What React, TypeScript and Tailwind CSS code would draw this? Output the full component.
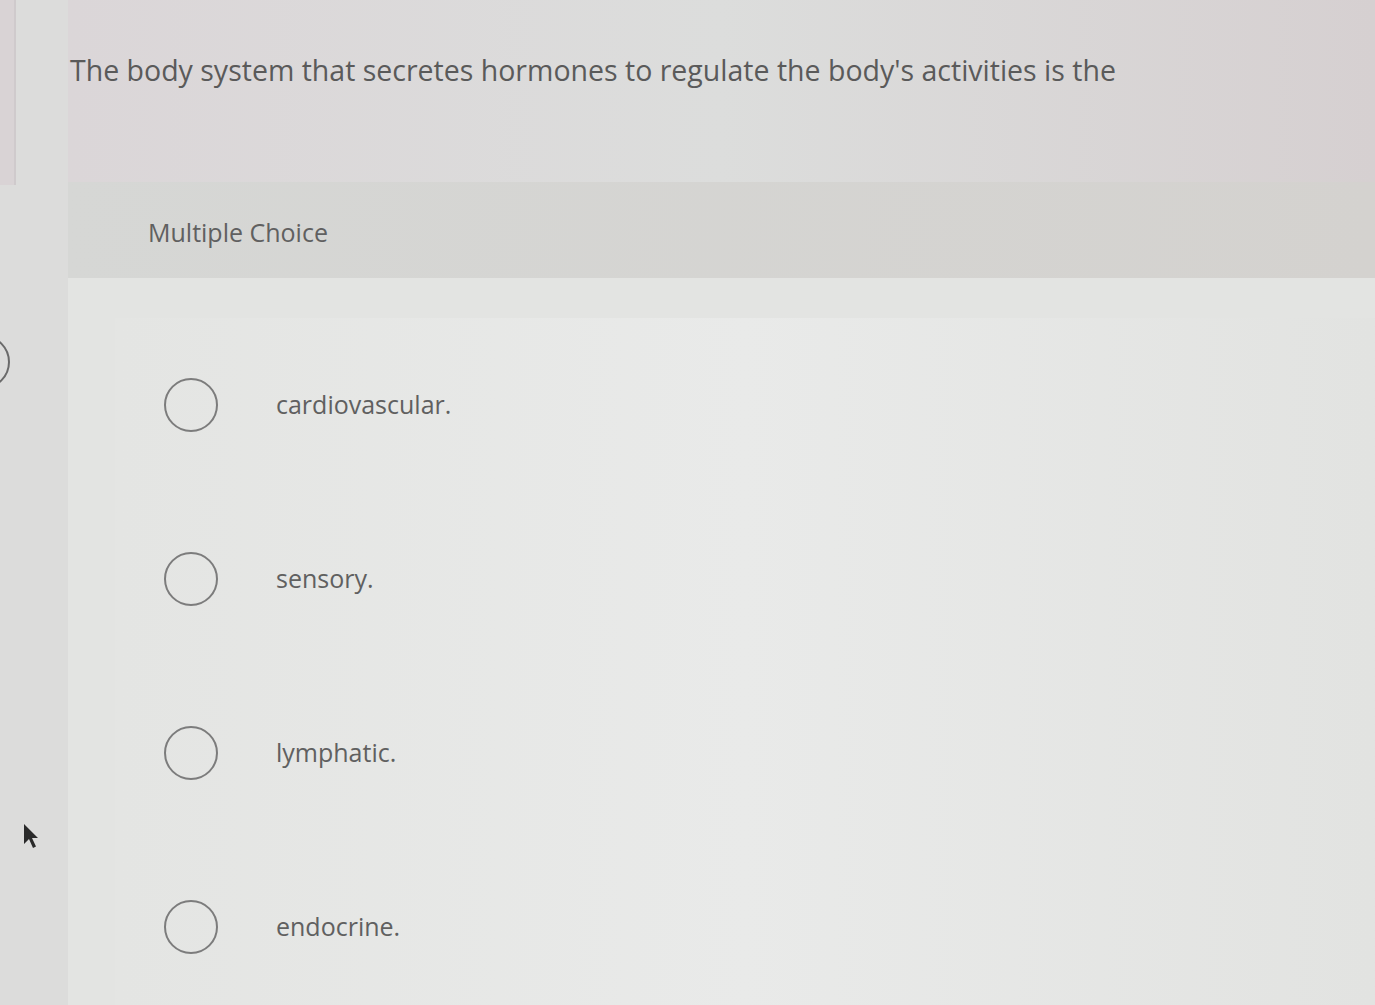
import React from 'react';

const options = ['cardiovascular.', 'sensory.', 'lymphatic.', 'endocrine.'];

function Radio() {
  return <div className="h-[54px] w-[54px] shrink-0 rounded-full border-2 border-[#7c7c7c]" />;
}

export default function App() {
  return (
    <div
      className="relative flex min-h-screen w-full overflow-hidden bg-[#dcdcdb] text-[#5a5a5a]"
      style={{ fontFamily: '"Open Sans", Lato, sans-serif' }}
    >
      <aside className="w-[16px] shrink-0 overflow-hidden">
        <div className="h-[185px] border-r-2 border-[#cfcacc] bg-[#d9d3d5]" />
        <div className="mt-[150px] -ml-[44px] h-[54px] w-[54px] rounded-full border-2 border-[#6a6a6a]" />
      </aside>

      <main className="flex-1 pl-[52px]">
        <div className="h-[182px] bg-linear-to-r from-[#dbd6d8] via-[#dcdddc] to-[#d6d0d1] pl-[2px] pt-[56px]">
          <p className="text-[28.5px] leading-none">
            The body system that secretes hormones to regulate the body's activities is the
          </p>
        </div>

        <section className="bg-[#e3e4e2]">
          <div className="flex h-[96px] items-center bg-linear-to-r from-[#d6d7d5] to-[#d4d2cf] pl-[80px] pt-[5px]">
            <span className="text-[25px] text-[#606060]">Multiple Choice</span>
          </div>

          <div className="pl-[47px] pt-[40px]">
            {options.map((opt) => (
              <div
                key={opt}
                className="flex h-[174px] items-center bg-linear-to-r from-[#e4e5e3] via-[#e9eae9] to-[#e2e3e1] pl-[49px]"
              >
                <Radio />
                <span className="ml-[58px] text-[25px] text-[#606060]">{opt}</span>
              </div>
            ))}
          </div>
        </section>
      </main>

      <svg
        className="absolute left-[22px] top-[822px]"
        width="18"
        height="28"
        viewBox="0 0 18 28"
      >
        <path d="M2 2 L2 22 L7 17 L11 26 L14 24.5 L10 16 L16 16 Z" fill="#2a2a2a" />
      </svg>
    </div>
  );
}
